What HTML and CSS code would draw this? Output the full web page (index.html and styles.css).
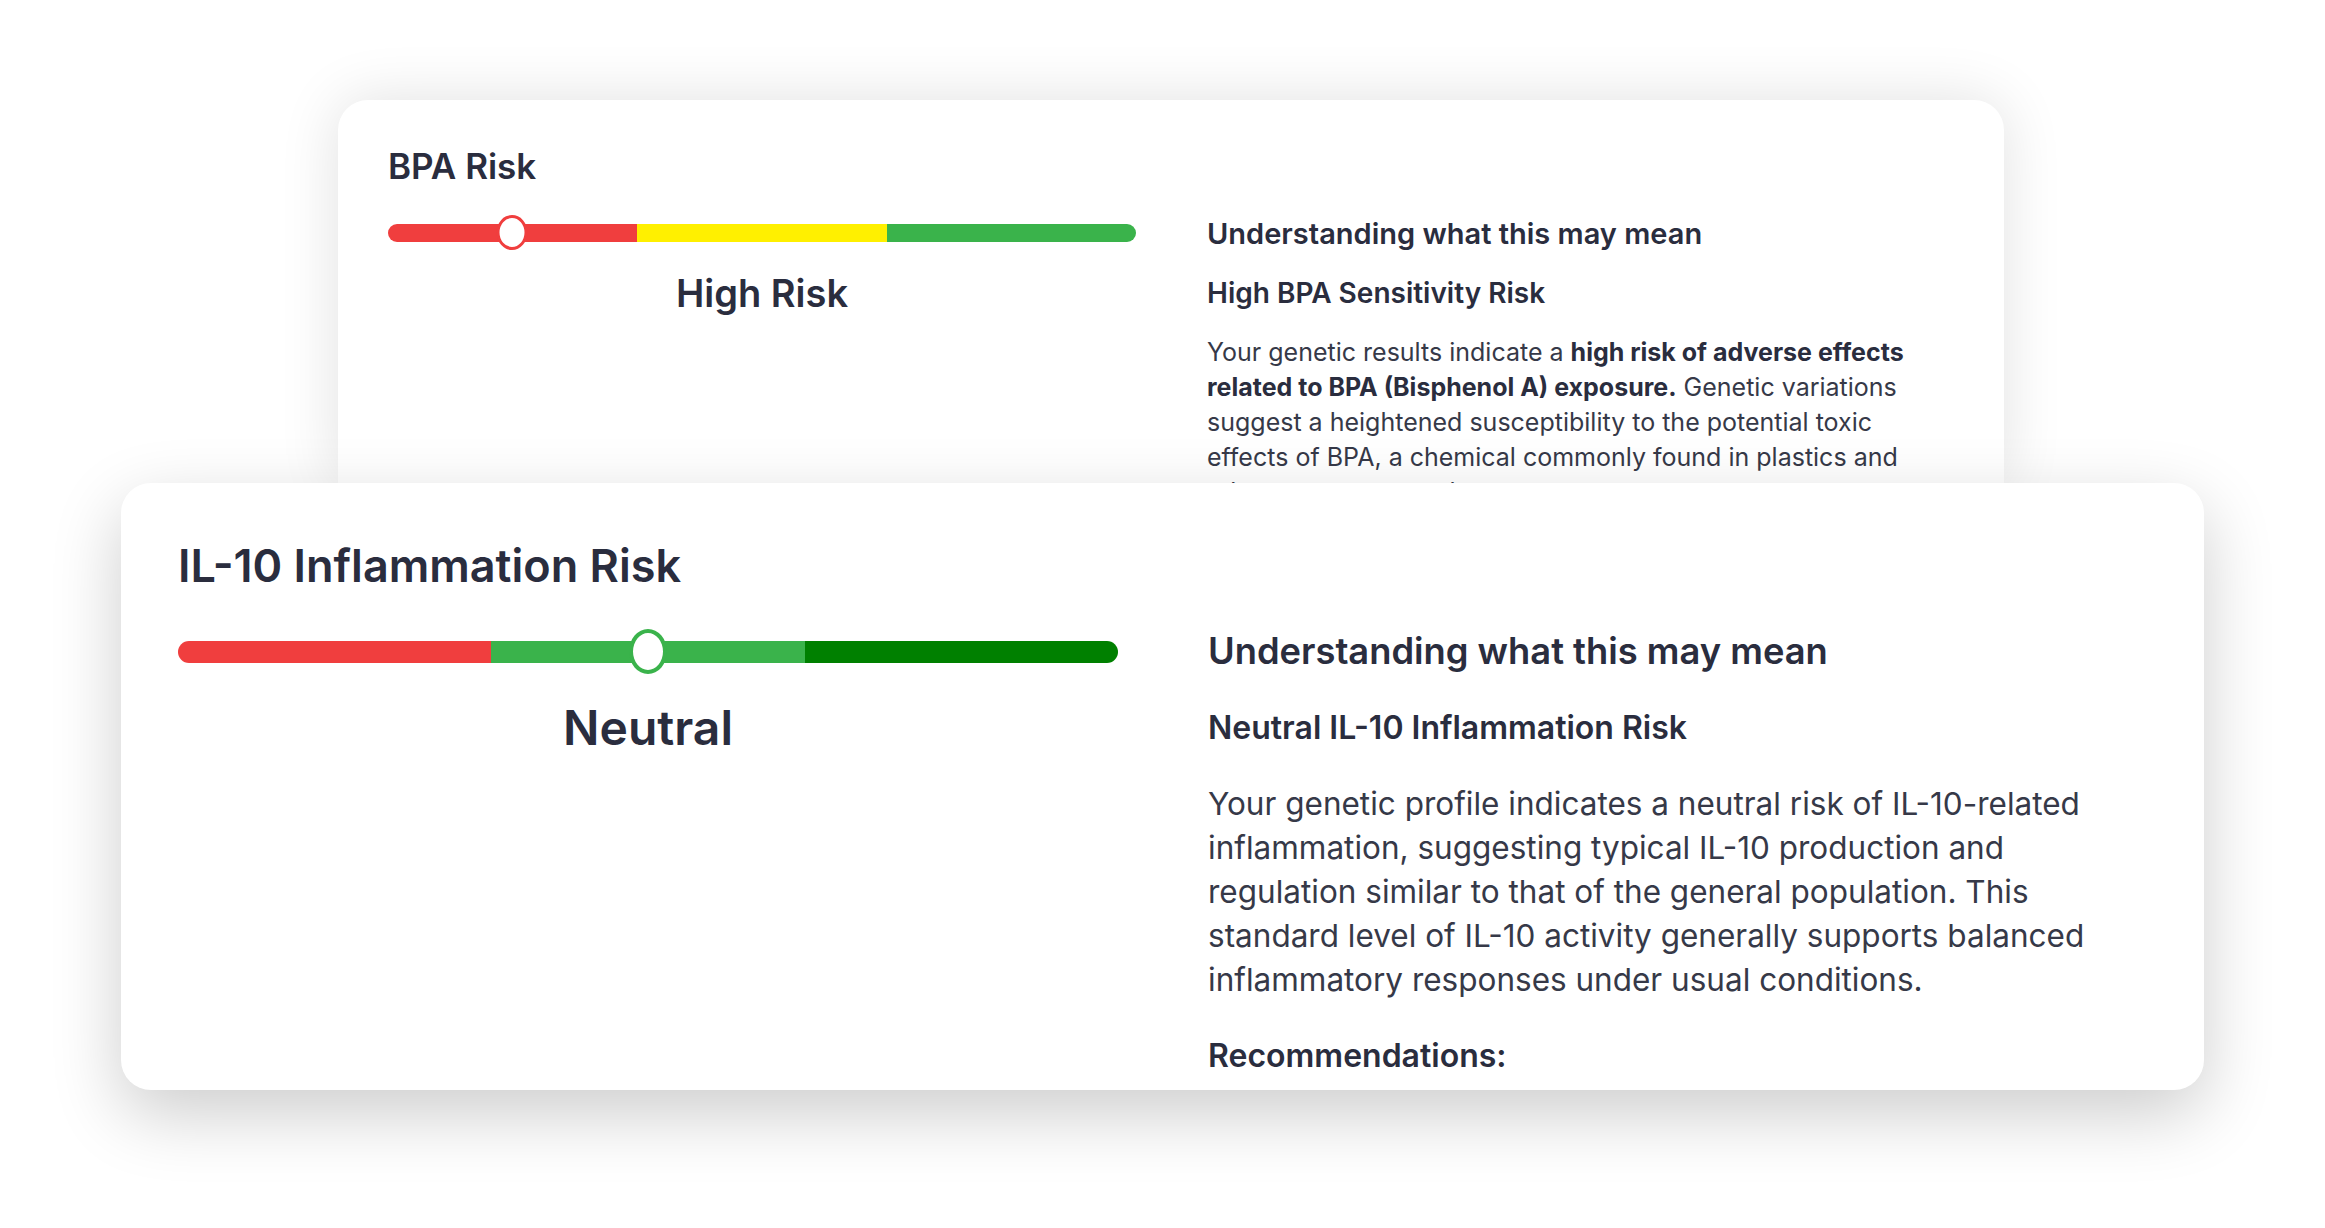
FILE: index.html
```html
<!DOCTYPE html>
<html lang="en">
<head>
  <meta charset="UTF-8" />
  <meta name="viewport" content="width=device-width, initial-scale=1.0" />
  <title>Genetic Risk Reports</title>
  <link rel="stylesheet" href="styles.css">
</head>
<body>
  <div class="stage">

    <!-- Card behind -->
    <section class="card card-back">
      <h2 class="card-title">BPA Risk</h2>
      <div class="card-body">
        <div class="gauge">
          <div class="track">
            <div class="track-bar">
              <span class="seg seg-red"></span>
              <span class="seg seg-yellow"></span>
              <span class="seg seg-green"></span>
            </div>
            <span class="knob knob-red" style="left: 16.6%"></span>
          </div>
          <p class="gauge-label">High Risk</p>
        </div>
        <div class="meaning">
          <h3>Understanding what this may mean</h3>
          <h4>High BPA Sensitivity Risk</h4>
          <p>Your genetic results indicate a <strong>high risk of adverse effects related to BPA (Bisphenol A) exposure.</strong> Genetic variations suggest a heightened susceptibility to the potential toxic effects of BPA, a chemical commonly found in plastics and other consumer products.</p>
        </div>
      </div>
    </section>

    <!-- Card in front -->
    <section class="card card-front">
      <h2 class="card-title">IL-10 Inflammation Risk</h2>
      <div class="card-body">
        <div class="gauge">
          <div class="track">
            <div class="track-bar">
              <span class="seg seg-red"></span>
              <span class="seg seg-green"></span>
              <span class="seg seg-darkgreen"></span>
            </div>
            <span class="knob knob-green" style="left: 50%"></span>
          </div>
          <p class="gauge-label">Neutral</p>
        </div>
        <div class="meaning">
          <h3>Understanding what this may mean</h3>
          <h4>Neutral IL-10 Inflammation Risk</h4>
          <p>Your genetic profile indicates a neutral risk of IL-10-related inflammation, suggesting typical IL-10 production and regulation similar to that of the general population. This standard level of IL-10 activity generally supports balanced inflammatory responses under usual conditions.</p>
          <h5>Recommendations:</h5>
          <p>Maintain a balanced, anti-inflammatory diet and regular physical activity.</p>
        </div>
      </div>
    </section>

  </div>
</body>
</html>
```

FILE: styles.css
```css
/* Page */
body {
  margin: 0;
  background-color: #fff;
  font-family: 'Inter', 'Noto Sans', sans-serif;
  color: #2a2d3e;
  overflow: hidden;
}

.stage {
  width: 2325px;
  height: 1228px;
  padding-top: 100px;
  box-sizing: border-box;
}

/* Cards */
.card {
  background-color: #fff;
  box-sizing: border-box;
  overflow: hidden;
}

.card h2,
.card h3,
.card h4,
.card h5,
.card p {
  margin: 0;
}

.card-title {
  font-weight: 600;
  line-height: 1.2;
}

.card-body {
  display: grid;
}

/* Gauge */
.track {
  position: relative;
  display: flex;
  align-items: center;
}

.track-bar {
  display: flex;
  width: 100%;
  border-radius: 999px;
  overflow: hidden;
}

.seg {
  flex: 1;
}

.seg-red { background-color: #f03e3e; }
.seg-yellow { background-color: #fff000; }
.seg-green { background-color: #3ab34b; }
.seg-darkgreen { background-color: #008000; }

.knob {
  position: absolute;
  top: 0;
  box-sizing: border-box;
  background-color: #fff;
  border-radius: 50%;
  transform: translateX(-50%);
}

.gauge-label {
  text-align: center;
  font-weight: 600;
  line-height: 1.2;
}

/* Text column */
.meaning h3,
.meaning h4,
.meaning h5 {
  font-weight: 600;
  line-height: 1.2;
}

.meaning p {
  color: #363948;
}

.meaning strong {
  font-weight: 700;
  color: #2a2d3e;
}

/* Back card (BPA) */
.card-back {
  width: 1666px;
  height: 383px;
  margin-left: 338px;
  padding: 45px 50px 0;
  border-radius: 30px 30px 0 0;
  box-shadow: 0 0 60px rgba(0, 0, 0, 0.12);
}

.card-back .card-title {
  font-size: 35px;
}

.card-back .card-body {
  grid-template-columns: 748px 747px;
  column-gap: 71px;
  margin-top: 28px;
}

.card-back .track {
  height: 35px;
}

.card-back .track-bar {
  height: 18px;
}

.card-back .knob {
  width: 31px;
  height: 35px;
  border: 3px solid #f03e3e;
}

.card-back .gauge-label {
  font-size: 38px;
  margin-top: 21px;
}

.card-back .meaning {
  padding-top: 2px;
}

.card-back .meaning h3 {
  font-size: 29px;
}

.card-back .meaning h4 {
  font-size: 28px;
  margin-top: 25px;
}

.card-back .meaning p {
  font-size: 25px;
  line-height: 35px;
  margin-top: 25px;
}

/* Front card (IL-10) */
.card-front {
  position: relative;
  width: 2083px;
  height: 607px;
  margin-left: 121px;
  padding: 56px 62px 0 57px;
  border-radius: 30px;
  box-shadow: 0 24px 70px rgba(0, 0, 0, 0.2);
}

.card-front .card-title {
  font-size: 45px;
}

.card-front .card-body {
  grid-template-columns: 940px 934px;
  column-gap: 90px;
  margin-top: 36px;
}

.card-front .track {
  height: 45px;
}

.card-front .track-bar {
  height: 22px;
}

.card-front .knob {
  width: 38px;
  height: 45px;
  border: 4px solid #3ab34b;
}

.card-front .gauge-label {
  font-size: 48px;
  margin-top: 25px;
}

.card-front .meaning {
  padding-top: 1px;
}

.card-front .meaning h3 {
  font-size: 36.3px;
}

.card-front .meaning h4 {
  font-size: 32px;
  margin-top: 35px;
}

.card-front .meaning p {
  font-size: 31.5px;
  line-height: 44px;
  margin-top: 35px;
}

.card-front .meaning h5 {
  font-size: 32px;
  margin-top: 35px;
}

.card-front .meaning h5 + p {
  margin-top: 20px;
}
```
